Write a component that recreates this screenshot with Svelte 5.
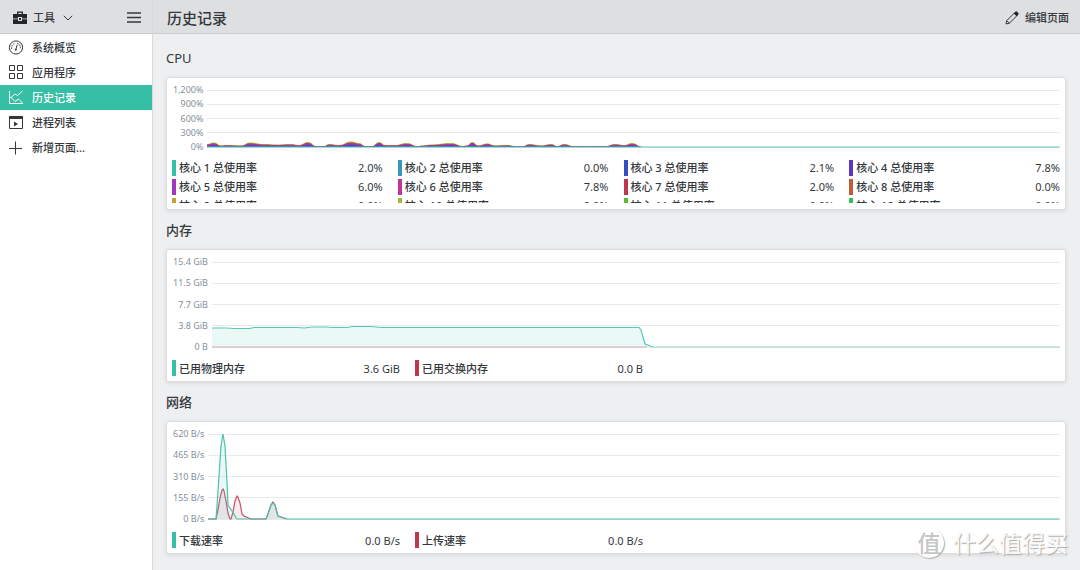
<script lang="ts">
  type Series = { color: string; points: number[][]; fill: number };
  type Entry = { color: string; name: string; value: string };
  type Chart = {
    title: string;
    height: number;
    labels: string[];
    series: Series[];
    legend: Entry[];
    columns: 'four' | 'two';
  };

  const nav = ['系统概览', '应用程序', '历史记录', '进程列表', '新增页面...'];
  let current = $state(2);

  // total load of all cores, [x, height] in plot units
  const load = [
    [0, 3], [7, 4.5], [14, 1.5], [20, 2], [34, 1.5], [43, 4.5], [56, 3], [70, 2.5], [84, 3], [92, 2], [101, 5],
    [109, 1], [117, 1], [122, 3], [132, 2], [144, 5.5], [152, 4], [158, 1], [165, 1], [172, 5], [178, 2],
    [188, 2], [200, 4], [210, 1], [216, 1.5], [224, 2.5], [244, 4], [256, 1], [260, 1.5], [265, 5], [271, 1.5],
    [280, 3.5], [288, 1.5], [300, 2], [308, 1], [316, 1], [322, 3], [334, 1.5], [344, 3], [350, 1], [357, 3],
    [366, 1], [382, 0.5], [390, 1], [398, 1], [408, 3], [417, 2], [425, 4], [435, 0], [852, 0],
  ];
  const layers: [string, number][] = [
    ['#8bbf35', 1], ['#c0a236', 0.85], ['#c03650', 0.78], ['#c036a0', 0.68], ['#7a36bf', 0.48], ['#3650bf', 0.34],
  ];

  const coreColors = [
    '#36bfa3', '#3698bf', '#364fbf', '#5d36bf', '#a336bf', '#bf3698',
    '#bf364f', '#bf5d36', '#bfa336', '#98bf36', '#4fbf36', '#36bf5d',
  ];
  const coreValues = ['2.0%', '0.0%', '2.1%', '7.8%', '6.0%', '7.8%', '2.0%', '0.0%', '0.0%', '2.0%', '0.0%', '0.0%'];

  const charts: Chart[] = [
    {
      title: 'CPU',
      height: 57,
      labels: ['1,200%', '900%', '600%', '300%', '0%'],
      series: [
        ...layers.map(([color, k]) => ({ color, fill: 1, points: load.map(([x, h]) => [x, 57 - h * k]) })),
        { color: '#5cc8b4', fill: 0, points: [[0, 57], [852, 57]] },
      ],
      legend: coreColors.map((color, i) => ({ color, name: `核心 ${i + 1} 总使用率`, value: coreValues[i] })),
      columns: 'four',
    },
    {
      title: '内存',
      height: 85,
      labels: ['15.4 GiB', '11.5 GiB', '7.7 GiB', '3.8 GiB', '0 B'],
      series: [
        {
          color: '#55cbb3', fill: 0.12,
          points: [
            [0, 66], [15, 66], [22, 66.5], [38, 66.5], [42, 65.5], [85, 65.5], [93, 66], [100, 65], [116, 65], [120, 65.5],
            [136, 65.5], [141, 64.5], [160, 64.5], [170, 65.5], [429, 65.5], [431, 68], [435, 82], [443, 85],
          ],
        },
        { color: '#d9a9b3', fill: 0, points: [[0, 85], [437, 85]] },
        { color: '#9bd3c8', fill: 0, points: [[443, 85], [852, 85]] },
      ],
      legend: [
        { color: '#36bfa3', name: '已用物理内存', value: '3.6 GiB' },
        { color: '#bf364f', name: '已用交换内存', value: '0.0 B' },
      ],
      columns: 'two',
    },
    {
      title: '网络',
      height: 85,
      labels: ['620 B/s', '465 B/s', '310 B/s', '155 B/s', '0 B/s'],
      series: [
        {
          color: '#c8506a', fill: 0.12,
          points: [
            [0, 85], [8, 85], [10, 76], [12, 64], [14, 56], [15, 55], [16, 57], [18, 67], [20, 79], [22, 85], [23, 85],
            [25, 78], [27, 67], [29, 62], [30, 63], [32, 69], [34, 80], [36, 82], [43, 85],
            [58, 85], [60, 80], [63, 71], [65, 68], [67, 71], [70, 82], [79, 85],
          ],
        },
        {
          color: '#48c4aa', fill: 0.12,
          points: [
            [0, 85], [8, 85], [9, 72], [11, 42], [13, 12], [15, 0], [17, 12], [19, 48], [20, 71], [24, 77], [29, 85],
            [58, 85], [60, 80], [63, 71], [65, 69], [67, 71], [70, 82], [79, 85], [852, 85],
          ],
        },
      ],
      legend: [
        { color: '#36bfa3', name: '下载速率', value: '0.0 B/s' },
        { color: '#bf364f', name: '上传速率', value: '0.0 B/s' },
      ],
      columns: 'two',
    },
  ];

  // the dense load series gets curves that are level at each point, the rest straight lines
  function line(points: number[][]) {
    return points.reduce((d, [x, y], i) => {
      if (i === 0) return `M${x} ${y}`;
      const [px, py] = points[i - 1];
      if (points.length !== load.length) return `${d}L${x} ${y}`;
      const mid = (px + x) / 2;
      return `${d}C${mid} ${py} ${mid} ${y} ${x} ${y}`;
    }, '');
  }

  function area(points: number[][], base: number) {
    return `${line(points)}L${points[points.length - 1][0]} ${base}L${points[0][0]} ${base}Z`;
  }
</script>

<div class="window">
  <aside class="sidebar">
    <div class="bar tools">
      <button class="menu" type="button">
        <svg width="16" height="16" viewBox="0 0 16 16">
          <path d="M5 4V1.5h6V4h4v4.5h-5V7H6v1.5H1V4zM6.3 4h3.4V2.8H6.3zM1 9.2h5V11h4V9.2h5V14H1zM7 8h2v2H7z" fill="#232629" fill-rule="evenodd" />
        </svg>
        <span>工具</span>
        <svg width="10" height="6" viewBox="0 0 10 6"><path d="M.8.8 5 5 9.2.8" fill="none" stroke="#34383c" /></svg>
      </button>
      <button class="burger" type="button" aria-label="菜单">
        <svg width="14" height="12" viewBox="0 0 14 12"><path d="M0 1h14M0 5.5h14M0 10h14" stroke="#34383c" stroke-width="1.6" /></svg>
      </button>
    </div>
    <nav>
      {#each nav as item, i (item)}
        <button class="item" class:active={current === i} type="button" onclick={() => (current = i)}>
          <svg width="16" height="16" viewBox="0 0 16 16" fill="none" stroke="currentColor">
            {#if i === 0}
              <circle cx="8" cy="7.5" r="6.6" />
              <path d="M3.8 9A4.5 4.5 0 0 1 6.5 3.5M9 3.2A4.5 4.5 0 0 1 12.2 9" stroke-dasharray="1.6 .8" />
              <path d="M9.2 4.8 8 9" />
              <circle cx="7.8" cy="9.7" r=".6" fill="currentColor" />
            {:else if i === 1}
              <path d="M1.5.5h5v5h-5zM9.5.5h5v5h-5zM1.5 8.5h5v5h-5zM9.5 8.5h5v5h-5z" />
            {:else if i === 2}
              <path d="M1.5 1v12.5H15M1.5 7.5h1.5L7 4l2.5 1.5L14.500 1M3 7.5l4 4 3.500-2.500 4 4" />
            {:else if i === 3}
              <path d="M1.5 1.5h13v12h-13z" />
              <path d="M1 1h14v3H1zM6 6.500v5L10 9z" fill="currentColor" stroke="none" />
            {:else}
              <path d="M7.5 1.5v13M1 8.5h13" />
            {/if}
          </svg>
          <span>{item}</span>
        </button>
      {/each}
    </nav>
  </aside>

  <main>
    <header class="bar">
      <h1>历史记录</h1>
      <button class="edit" type="button">
        <svg width="14" height="14" viewBox="0 0 14 14">
          <path d="M1 13l.8-3.4L9.4 2l2.6 2.6-7.6 7.6zM1.8 9.6l2.6 2.6" fill="none" stroke="#34383c" stroke-linejoin="round" />
          <path d="m8.8 2.4 1.8-1.8a.8.8 0 0 1 1.2 0l1.6 1.6a.8.8 0 0 1 0 1.2l-1.8 1.8z" fill="#232629" />
        </svg>
        <span>编辑页面</span>
      </button>
    </header>

    <div class="content">
      {#each charts as chart (chart.title)}
        <section>
          <h2 class:latin={chart.title === 'CPU'}>{chart.title}</h2>
          <div class="card">
            <div class="chart">
              <div class="labels">
                {#each chart.labels as label (label)}<span>{label}</span>{/each}
              </div>
              <svg class="plot" style:height="{chart.height}px" viewBox="0 0 852 {chart.height}" preserveAspectRatio="none">
                {#each [0, 1, 2, 3, 4] as n (n)}
                  <path class="grid" d="M0 {(chart.height * n) / 4}H852" />
                {/each}
                {#each chart.series as s, i (i)}
                  <path d={area(s.points, chart.height)} fill={s.color} fill-opacity={s.fill} />
                  {#if s.fill < 1}<path class="line" d={line(s.points)} stroke={s.color} />{/if}
                {/each}
              </svg>
            </div>
            <ul class="legend {chart.columns}">
              {#each chart.legend as entry (entry.name)}
                <li>
                  <i style:background={entry.color}></i>
                  <span class="name">{entry.name}</span>
                  <span>{entry.value}</span>
                </li>
              {/each}
            </ul>
          </div>
        </section>
      {/each}
    </div>
  </main>

  <div class="watermark"><b>值</b><span>什么值得买</span></div>
</div>

<style>
  :global(body) { margin: 0; background: #eeeff1; }
  .window {
    position: relative; display: flex; min-height: 100vh;
    font: 11px/16px "Noto Sans", "Noto Sans CJK SC", sans-serif; color: #34383c;
  }
  button { font: inherit; color: inherit; background: none; border: 0; padding: 0; cursor: pointer; }
  svg { display: block; flex: none; }
  .menu, .edit, .item, .name { font-weight: 500; }

  .bar {
    display: flex; align-items: center; justify-content: space-between;
    box-sizing: border-box; height: 34px; background: #dedfe1; border-bottom: 1px solid #c9cbce;
  }
  .tools { padding: 2px 11px 0 12px; }
  .menu { display: flex; align-items: center; gap: 5px; }
  .menu span { margin-right: 3px; }
  .sidebar { width: 152px; flex: none; background: #fff; border-right: 1px solid #d6d8da; }
  nav { padding-top: 1px; }
  .item { display: flex; align-items: center; gap: 8px; width: 100%; height: 25px; padding: 0 8px; }
  .item.active { background: #36bfa5; color: #fff; }

  main { flex: 1; min-width: 0; }
  header { padding: 2px 11px 0 14px; }
  h1 { font-size: 15px; font-weight: 500; margin: 0; }
  .edit { display: flex; align-items: center; gap: 6px; }

  .content { padding: 4px 14px 16px 13px; }
  h2 { height: 39px; font-size: 13px; line-height: 41px; font-weight: 500; margin: 0; }
  .latin { font-weight: 400; }
  .card {
    box-sizing: border-box; min-height: 133px; padding: 5px; background: #fff;
    border: 1px solid #dadcde; border-radius: 3px; box-shadow: 0 1px 4px #0000001a;
  }
  .chart { display: flex; gap: 4px; margin-bottom: 6px; }
  .labels {
    display: flex; flex-direction: column; justify-content: space-between; padding-left: 1px;
    font-size: 9px; line-height: 14px; color: #84909b; text-align: right;
  }
  .plot { flex: 1; min-width: 0; margin: 7px 0; overflow: visible; }
  .grid { stroke: #e9eaeb; vector-effect: non-scaling-stroke; shape-rendering: crispEdges; }
  .line { fill: none; stroke-width: 1.2; vector-effect: non-scaling-stroke; }

  .legend { display: grid; gap: 3px 15px; margin: 0; padding: 0; list-style: none; overflow: hidden; }
  .four { grid-template-columns: repeat(4, 1fr); height: 43px; }
  .two { grid-template-columns: 228px 228px; line-height: 18px; }
  li { display: flex; gap: 3px; height: 16px; }
  i { width: 4px; }
  .name { flex: 1; }

  .watermark {
    position: absolute; right: 12px; bottom: 12px; display: flex; align-items: center; gap: 9px;
    font-size: 23px; line-height: 30px; color: #f8f8f8; text-shadow: 1px 1px 1px #aaa; pointer-events: none;
  }
  .watermark b {
    width: 30px; border-radius: 50%; text-align: center; font-weight: 500; background: #fff; color: #c6c6c6;
    text-shadow: none; box-shadow: 1px 1px 1px #b0b0b0;
  }
</style>
